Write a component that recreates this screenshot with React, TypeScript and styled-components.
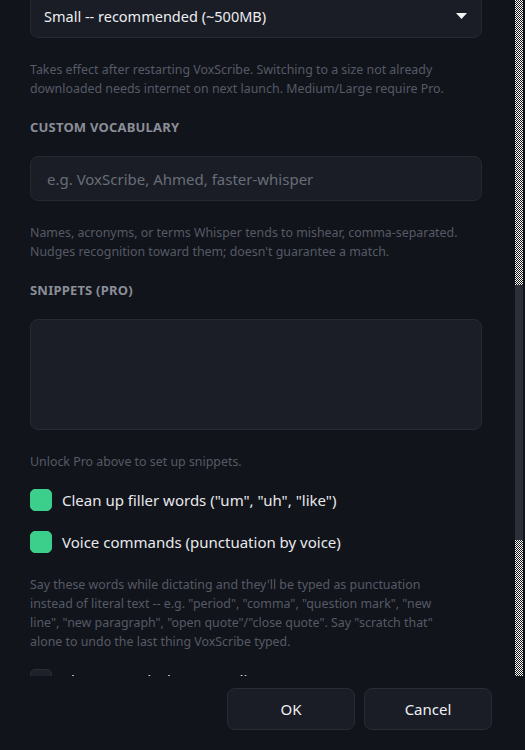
import { useLayoutEffect, useRef } from "react";
import styled, { createGlobalStyle } from "styled-components";

const GlobalStyle = createGlobalStyle`
    html, body {
        margin: 0;
        padding: 0;
        background: #12141b;
        overflow: hidden;
    }

    * {
        box-sizing: border-box;
    }
`;

const FONT = `"Noto Sans", "Open Sans", sans-serif`;

const Window = styled.div`
    display: flex;
    flex-direction: column;
    width: 525px;
    height: 750px;
    background: #12141b;
    font-family: ${FONT};
    color: #e6e7ea;
`;

const ScrollArea = styled.div`
    display: flex;
    height: 676px;
`;

const Viewport = styled.div`
    flex: 1;
    overflow: hidden;
`;

const Content = styled.div`
    display: flex;
    flex-direction: column;
    gap: 20px;
    padding: 20px 31px 40px 30px;
`;

const ScrollBar = styled.div`
    width: 8px;
    margin: 0 2px 0 2px;
    display: flex;
    flex-direction: column;
    background-color: #ffffff;
    background-image: repeating-conic-gradient(#111 0 25%, #fff 0 50%);
    background-size: 2px 2px;
`;

const ScrollThumb = styled.div`
    margin-top: 285px;
    height: 255px;
    background: #2c2f38;
`;

const Heading = styled.div`
    font-size: 13px;
    font-weight: 700;
    letter-spacing: 0.2px;
    line-height: 18px;
    color: #8a8e98;
`;

const Help = styled.p`
    max-width: 446px;
    margin: 2px 0 0 0;
    font-size: 12.4px;
    line-height: 19px;
    color: #555a66;
`;

const Select = styled.div`
    display: flex;
    align-items: center;
    height: 44px;
    padding: 0 14px 0 13px;
    background: #1a1d25;
    border: 1px solid #262932;
    border-radius: 8px;
    font-size: 14.5px;
    color: #eceef1;

    span {
        flex: 1;
    }
`;

const Arrow = styled.svg`
    width: 11px;
    height: 6px;
    fill: #f2f3f5;
`;

const Input = styled.div`
    display: flex;
    align-items: center;
    height: 45px;
    padding: 0 16px;
    background: #1a1d25;
    border: 1px solid #262932;
    border-radius: 8px;
    font-size: 15px;
    color: #686d78;
`;

const TextArea = styled.div`
    height: 111px;
    background: #1b1e26;
    border: 1px solid #282b34;
    border-radius: 8px;
`;

const CheckRow = styled.label`
    display: flex;
    align-items: center;
    gap: 10px;
    height: 22px;
    margin-top: -2px;
    font-size: 15px;
    color: #e8e9ec;

    & + & {
        margin-top: 0;
    }
`;

const Box = styled.span<{ $checked?: boolean }>`
    width: 22px;
    height: 22px;
    flex: none;
    border-radius: 5px;
    background: ${p => p.$checked ? "#3ccf8b" : "#1e2129"};
    border: 1px solid ${p => p.$checked ? "#3ccf8b" : "#2a2d36"};
`;

const Footer = styled.div`
    display: flex;
    justify-content: flex-end;
    gap: 9px;
    padding: 12px 33px 0 0;
`;

const Button = styled.button`
    width: 128px;
    height: 42px;
    background: #1a1d25;
    border: 1px solid #292c35;
    border-radius: 8px;
    font-family: ${FONT};
    font-size: 15px;
    color: #eef0f3;
`;

export default function App() {
    const viewRef = useRef<HTMLDivElement>(null);
    const selectRef = useRef<HTMLDivElement>(null);

    useLayoutEffect(() => {
        const view = viewRef.current;
        const select = selectRef.current;
        if (view && select) {
            view.scrollTop = select.offsetTop - view.offsetTop + 6;
        }
    }, []);

    return (
        <Window>
            <GlobalStyle />
            <ScrollArea>
                <Viewport ref={viewRef}>
                    <Content>
                        <Heading>WHISPER MODEL</Heading>
                        <Select ref={selectRef}>
                            <span>Small -- recommended (~500MB)</span>
                            <Arrow viewBox="0 0 11 6"><path d="M0 0h11L5.5 6z" /></Arrow>
                        </Select>
                        <Help>
                            Takes effect after restarting VoxScribe. Switching to a size not already
                            downloaded needs internet on next launch. Medium/Large require Pro.
                        </Help>
                        <Heading>CUSTOM VOCABULARY</Heading>
                        <Input>e.g. VoxScribe, Ahmed, faster-whisper</Input>
                        <Help>
                            Names, acronyms, or terms Whisper tends to mishear, comma-separated.
                            Nudges recognition toward them; doesn't guarantee a match.
                        </Help>
                        <Heading>SNIPPETS (PRO)</Heading>
                        <TextArea />
                        <Help>Unlock Pro above to set up snippets.</Help>
                        <CheckRow><Box $checked />Clean up filler words ("um", "uh", "like")</CheckRow>
                        <CheckRow><Box $checked />Voice commands (punctuation by voice)</CheckRow>
                        <Help>
                            Say these words while dictating and they'll be typed as punctuation<br />
                            instead of literal text -- e.g. "period", "comma", "question mark", "new<br />
                            line", "new paragraph", "open quote"/"close quote". Say "scratch that"<br />
                            alone to undo the last thing VoxScribe typed.
                        </Help>
                        <CheckRow><Box />Play a sound when recording starts/stops</CheckRow>
                    </Content>
                </Viewport>
                <ScrollBar>
                    <ScrollThumb />
                </ScrollBar>
            </ScrollArea>
            <Footer>
                <Button>OK</Button>
                <Button>Cancel</Button>
            </Footer>
        </Window>
    );
}
